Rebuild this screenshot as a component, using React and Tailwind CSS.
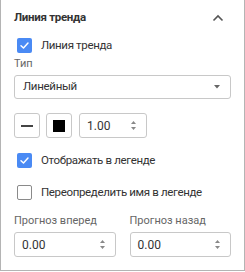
import React, { useState } from 'react';

const font = { fontFamily: 'Roboto, "Noto Sans", sans-serif' };

const Check = ({ checked, onChange, label }) => (
  <label className="flex items-center gap-[9px] h-[15px] cursor-pointer" onClick={onChange}>
    {checked ? (
      <span className="w-[15px] h-[15px] shrink-0 rounded-[2px] bg-[#4a8af4] flex items-center justify-center">
        <svg width="11" height="11" viewBox="0 0 12 12" fill="none">
          <path d="M2.2 6.2 L4.9 8.8 L9.8 3.4" stroke="white" strokeWidth="1.6" strokeLinecap="round" strokeLinejoin="round" />
        </svg>
      </span>
    ) : (
      <span className="w-[15px] h-[15px] shrink-0 rounded-[2px] border-[1.5px] border-[#8a8a8a] bg-white" />
    )}
    <span className="text-[11.5px] tracking-[-0.35px] text-[#333] whitespace-nowrap">{label}</span>
  </label>
);

const Spinner = () => (
  <svg width="7" height="11" viewBox="0 0 7 11" className="text-[#888]">
    <path d="M3.5 1 L6 4 L1 4 Z" fill="currentColor" />
    <path d="M3.5 10 L6 7 L1 7 Z" fill="currentColor" />
  </svg>
);

const NumberField = ({ value, className }) => (
  <div className={`h-[25px] border border-[#c8c8c8] rounded-[3px] flex items-center justify-between pl-[7px] pr-[9px] ${className}`}>
    <span className="text-[12px] text-[#333]">{value}</span>
    <Spinner />
  </div>
);

const App = () => {
  const [trend, setTrend] = useState(true);
  const [legend, setLegend] = useState(true);
  const [rename, setRename] = useState(false);

  return (
    <div style={font} className="w-[245px] h-[271px] bg-white border-x border-b border-[#b4b4b4] flex flex-col px-[13px]">
      <div className="flex items-center justify-between h-[34px] pt-[1px]">
        <span className="text-[11.5px] tracking-[-0.3px] font-bold text-[#333]">Линия тренда</span>
        <svg width="12" height="8" viewBox="0 0 12 8" className="mr-[7px]">
          <path d="M1.5 6.5 L6 2 L10.5 6.5" stroke="#555" strokeWidth="1.6" fill="none" />
        </svg>
      </div>

      <div className="pl-[3px] mt-[4px]">
        <Check checked={trend} onChange={() => setTrend(!trend)} label="Линия тренда" />
      </div>

      <div className="text-[11px] text-[#666] mt-[4px] leading-[13px]">Тип</div>

      <div className="mt-[5px] h-[24px] border border-[#c8c8c8] rounded-[3px] flex items-center justify-between pl-[8px] pr-[10px]">
        <span className="text-[11.5px] tracking-[-0.3px] text-[#333]">Линейный</span>
        <svg width="6" height="4" viewBox="0 0 6 4">
          <path d="M0 0 L6 0 L3 3.5 Z" fill="#666" />
        </svg>
      </div>

      <div className="mt-[14px] flex items-center gap-[6px]">
        <div className="w-[26px] h-[25px] border border-[#c8c8c8] rounded-[3px] flex items-center justify-center">
          <span className="w-[12px] h-[2px] bg-[#444]" />
        </div>
        <div className="w-[26px] h-[25px] border border-[#c8c8c8] rounded-[3px] flex items-center justify-center">
          <span className="w-[12px] h-[12px] bg-black" />
        </div>
        <NumberField value="1.00" className="w-[68px] ml-[1px]" />
      </div>

      <div className="pl-[3px] mt-[15px]">
        <Check checked={legend} onChange={() => setLegend(!legend)} label="Отображать в легенде" />
      </div>

      <div className="pl-[3px] mt-[17px]">
        <Check checked={rename} onChange={() => setRename(!rename)} label="Переопределить имя в легенде" />
      </div>

      <div className="mt-[14px] grid grid-cols-2 gap-x-[14px]">
        <div className="flex flex-col">
          <span className="text-[11px] text-[#666] leading-[13px]">Прогноз вперед</span>
          <NumberField value="0.00" className="mt-[5px]" />
        </div>
        <div className="flex flex-col">
          <span className="text-[11px] text-[#666] leading-[13px]">Прогноз назад</span>
          <NumberField value="0.00" className="mt-[5px]" />
        </div>
      </div>
    </div>
  );
};

export default App;
